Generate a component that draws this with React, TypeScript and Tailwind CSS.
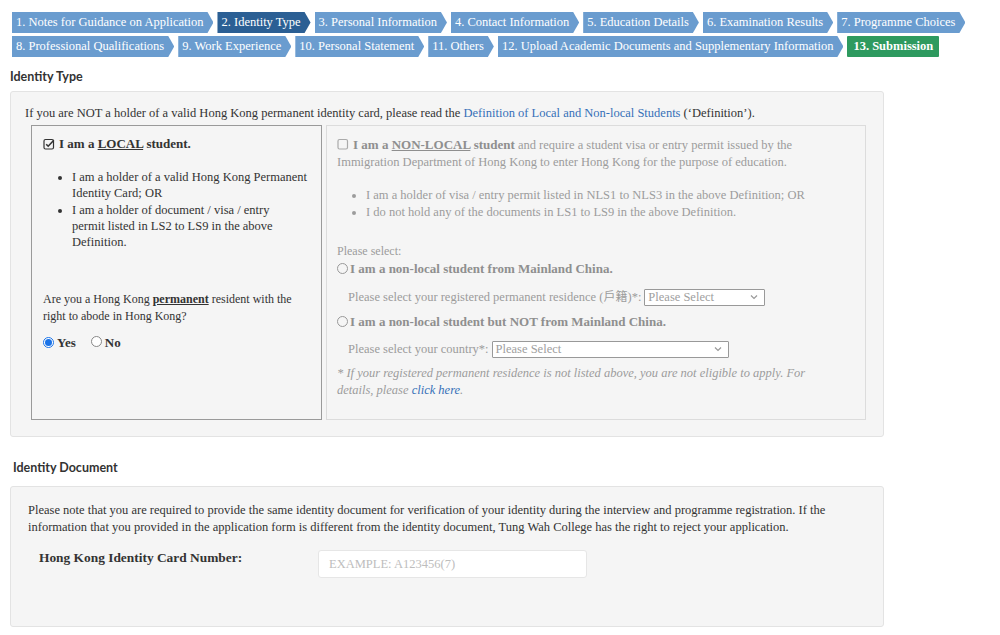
import React from "react";

const row1 = [
  { t: "1. Notes for Guidance on Application" },
  { t: "2. Identity Type", active: true },
  { t: "3. Personal Information" },
  { t: "4. Contact Information" },
  { t: "5. Education Details" },
  { t: "6. Examination Results" },
  { t: "7. Programme Choices" },
];
const row2 = [
  { t: "8. Professional Qualifications" },
  { t: "9. Work Experience" },
  { t: "10. Personal Statement" },
  { t: "11. Others" },
  { t: "12. Upload Academic Documents and Supplementary Information" },
];

function Tab({ t, active }: { t: string; active?: boolean }) {
  return (
    <div
      className={`h-[21px] flex items-center pl-[4px] pr-[10px] text-white text-[12.5px] whitespace-nowrap [clip-path:polygon(0_0,calc(100%-6px)_0,100%_50%,calc(100%-6px)_100%,0_100%)] ${
        active ? "bg-[#2b5f94]" : "bg-[#6a9ccf]"
      }`}
    >
      {t}
    </div>
  );
}

function CheckSquare({ checked, color }: { checked: boolean; color: string }) {
  return (
    <svg width="12" height="12" viewBox="0 0 12 12" className="inline-block shrink-0">
      <rect x="1" y="1.5" width="9.5" height="9.5" rx="1.5" fill="none" stroke={color} strokeWidth="1.2" />
      {checked && <path d="M3.2 6.2 L5.2 8.2 L10.8 2.2" fill="none" stroke={color} strokeWidth="1.6" />}
    </svg>
  );
}

function Radio() {
  return <span className="inline-block w-[11px] h-[11px] rounded-full border border-[#888] bg-white shrink-0" />;
}

function RadioChecked() {
  return (
    <span className="inline-flex w-[11px] h-[11px] rounded-full border border-[#1a73e8] bg-white items-center justify-center shrink-0">
      <span className="w-[7px] h-[7px] rounded-full bg-[#1a73e8]" />
    </span>
  );
}

function GreyRadio() {
  return <span className="inline-block w-[11px] h-[11px] rounded-full border border-[#999] shrink-0" />;
}

function Select({ w }: { w: string }) {
  return (
    <div className={`${w} h-[17px] border border-[#999] bg-white flex items-center justify-between pl-[3px] pr-[6px] text-[#a0a0a0] text-[12.5px] rounded-[1px]`}>
      <span>Please Select</span>
      <svg width="8" height="6" viewBox="0 0 8 6">
        <path d="M1 1.5 L4 4.5 L7 1.5" fill="none" stroke="#999" strokeWidth="1.2" />
      </svg>
    </div>
  );
}

export default function App() {
  return (
    <div className="w-[1000px] h-[635px] overflow-hidden bg-white font-['Liberation_Serif',serif] text-[#333]">
      {/* Tabs */}
      <div className="pt-[12px] pl-[12px] flex flex-col gap-[3px]">
        <div className="flex gap-[4px]">
          {row1.map((r) => (
            <Tab key={r.t} t={r.t} active={r.active} />
          ))}
        </div>
        <div className="flex gap-[4px]">
          {row2.map((r) => (
            <Tab key={r.t} t={r.t} />
          ))}
          <div className="h-[21px] flex items-center px-[6px] bg-[#2e9a5f] text-white text-[12.5px] font-bold whitespace-nowrap rounded-[1px]">
            13. Submission
          </div>
        </div>
      </div>

      {/* Identity Type */}
      <div className="ml-[10px] mt-[12px] h-[16px] leading-[16px] font-['Lato',sans-serif] font-bold text-[12.5px] text-[#333]">
        Identity Type
      </div>
      <div className="ml-[10px] mt-[6px] w-[874px] h-[346px] bg-[#f5f5f5] border border-[#e3e3e3] rounded-[3px] pt-[13px]">
        <div className="pl-[14px] text-[12.5px] leading-[17px]">
          If you are NOT a holder of a valid Hong Kong permanent identity card, please read the{" "}
          <span className="text-[#3570b8]">Definition of Local and Non-local Students</span> (‘Definition’).
        </div>
        <div className="ml-[20px] mt-[3px] flex gap-[4px]">
          {/* Local */}
          <div className="w-[291px] h-[295px] border border-[#9a9a9a] pl-[11px] pr-[10px] pt-[9px] text-[12.5px]">
            <div className="h-[18px] flex items-center gap-[4px] font-bold text-[13px]">
              <CheckSquare checked color="#333" />
              <span>
                I am a <span className="underline">LOCAL</span> student.
              </span>
            </div>
            <ul className="mt-[16px] pl-[29px] leading-[16.3px] list-disc">
              <li>
                I am a holder of a valid Hong Kong Permanent
                <br />
                Identity Card; OR
              </li>
              <li>
                I am a holder of document / visa / entry
                <br />
                permit listed in LS2 to LS9 in the above
                <br />
                Definition.
              </li>
            </ul>
            <div className="mt-[41px] leading-[17px] text-[12px]">
              Are you a Hong Kong <span className="font-bold underline">permanent</span> resident with the
              <br />
              right to abode in Hong Kong?
            </div>
            <div className="mt-[8px] h-[18px] flex items-center font-bold text-[13px]">
              <RadioChecked />
              <span className="ml-[3px]">Yes</span>
              <span className="ml-[15px]">
                <Radio />
              </span>
              <span className="ml-[3px]">No</span>
            </div>
          </div>
          {/* Non-local */}
          <div className="w-[540px] h-[295px] border border-[#dcdcdc] pl-[10px] pt-[10px] text-[12.5px] text-[#9c9c9c]">
            <div className="leading-[17px] pr-[40px]">
              <span className="inline-flex align-[-1px] mr-[4px]">
                <CheckSquare checked={false} color="#aaa" />
              </span>
              <span className="font-bold text-[13px] text-[#8f8f8f]">
                I am a <span className="underline">NON-LOCAL</span> student
              </span>{" "}
              and require a student visa or entry permit issued by the Immigration Department of Hong Kong to enter Hong Kong for the purpose of education.
            </div>
            <ul className="mt-[16px] pl-[29px] leading-[17px] list-disc">
              <li>I am a holder of visa / entry permit listed in NLS1 to NLS3 in the above Definition; OR</li>
              <li>I do not hold any of the documents in LS1 to LS9 in the above Definition.</li>
            </ul>
            <div className="mt-[22px] leading-[17px] text-[12px]">Please select:</div>
            <div className="h-[17px] flex items-center gap-[2px] font-bold text-[13px] text-[#8f8f8f]">
              <GreyRadio />
              <span>I am a non-local student from Mainland China.</span>
            </div>
            <div className="mt-[11px] h-[18px] flex items-center pl-[11px] gap-[3px] text-[12.5px]">
              <span>
                Please select your registered permanent residence (
                <span className="font-['Noto_Sans_CJK_TC',sans-serif] text-[12px]">戶籍</span>)*:
              </span>
              <Select w="w-[121px]" />
            </div>
            <div className="mt-[7px] h-[17px] flex items-center gap-[2px] font-bold text-[13px] text-[#8f8f8f]">
              <GreyRadio />
              <span>I am a non-local student but NOT from Mainland China.</span>
            </div>
            <div className="mt-[10px] h-[18px] flex items-center pl-[11px] gap-[3px] text-[12.5px]">
              <span>Please select your country*:</span>
              <Select w="w-[237px]" />
            </div>
            <div className="mt-[7px] leading-[16.5px] italic text-[12.5px] pr-[50px]">
              * If your registered permanent residence is not listed above, you are not eligible to apply. For details, please{" "}
              <span className="text-[#3570b8]">click here</span>.
            </div>
          </div>
        </div>
      </div>

      {/* Identity Document */}
      <div className="ml-[13px] mt-[23px] h-[16px] leading-[16px] font-['Lato',sans-serif] font-bold text-[12.5px] text-[#333]">
        Identity Document
      </div>
      <div className="ml-[10px] mt-[10px] w-[874px] h-[141px] bg-[#f5f5f5] border border-[#e3e3e3] rounded-[3px] pt-[15px] pl-[17px] pr-[20px]">
        <div className="text-[12.5px] leading-[17px]">
          Please note that you are required to provide the same identity document for verification of your identity during the interview and programme registration. If the information that you provided in the application form is different from the identity document, Tung Wah College has the right to reject your application.
        </div>
        <div className="mt-[14px] flex">
          <div className="ml-[11px] w-[279px] font-bold text-[13.4px] leading-[16px]">Hong Kong Identity Card Number:</div>
          <div className="w-[269px] h-[28px] bg-white border border-[#e6e6e6] rounded-[3px] flex items-center pl-[10px] text-[12.5px] text-[#bdbdbd]">
            EXAMPLE: A123456(7)
          </div>
        </div>
      </div>
    </div>
  );
}
